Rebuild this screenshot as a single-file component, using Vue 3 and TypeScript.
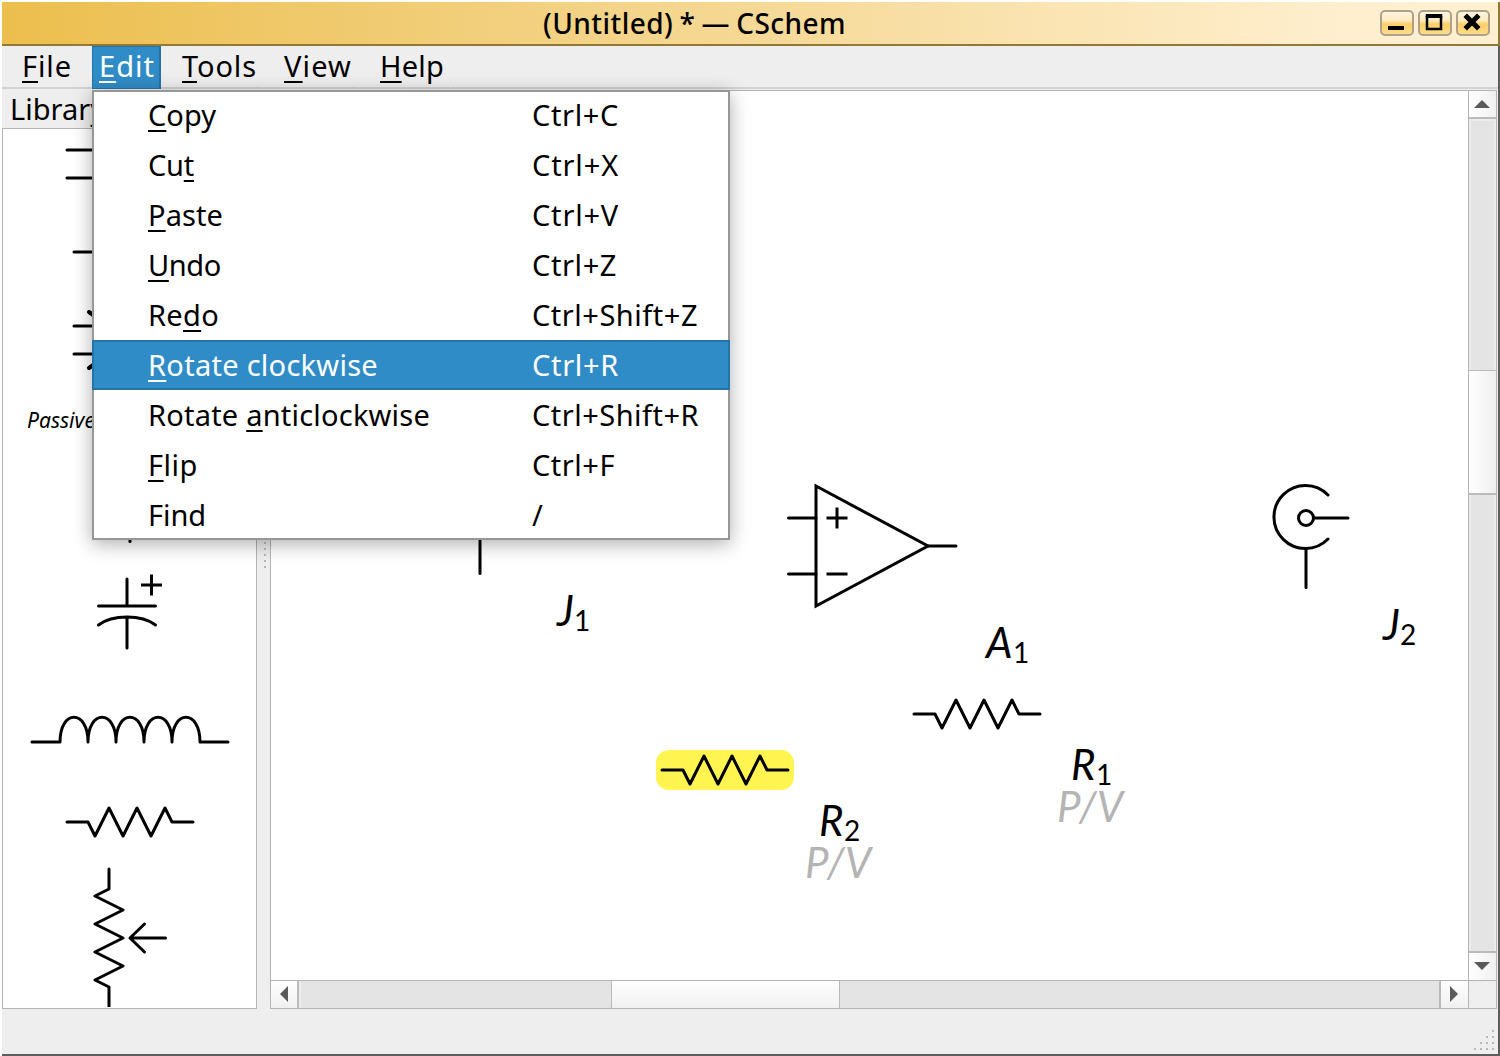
<script setup lang="ts">
import type { Directive } from 'vue'

interface Entry {
  pre: string
  key: string
  post: string
  width: number
}
interface MenuEntry extends Entry {
  shortcut: string
  shortcutWidth: number
  active?: boolean
}
interface PartLabel {
  name: string
  index: string
  x: number
  y: number
  subX: number
  value?: boolean
}

// Spreads the letters so that a caption takes exactly the given advance width.
const vFit: Directive<HTMLElement, number> = {
  mounted(el, { value }) {
    const count = (el.textContent ?? '').length
    const natural = el.getBoundingClientRect().width
    el.style.letterSpacing = `${(value - natural) / count}px`
  },
}

const menuBar: (Entry & { left: number; box: number; active?: boolean })[] = [
  { pre: '', key: 'F', post: 'ile', width: 50, left: 20, box: 90 },
  { pre: '', key: 'E', post: 'dit', width: 56, left: 6, box: 69, active: true },
  { pre: '', key: 'T', post: 'ools', width: 75, left: 21, box: 102 },
  { pre: '', key: 'V', post: 'iew', width: 68, left: 21, box: 96 },
  { pre: '', key: 'H', post: 'elp', width: 64, left: 21, box: 92 },
]

const editMenu: MenuEntry[] = [
  { pre: '', key: 'C', post: 'opy', width: 68, shortcut: 'Ctrl+C', shortcutWidth: 87 },
  { pre: 'Cu', key: 't', post: '', width: 46, shortcut: 'Ctrl+X', shortcutWidth: 87 },
  { pre: '', key: 'P', post: 'aste', width: 75, shortcut: 'Ctrl+V', shortcutWidth: 87 },
  { pre: '', key: 'U', post: 'ndo', width: 73, shortcut: 'Ctrl+Z', shortcutWidth: 85 },
  { pre: 'Re', key: 'd', post: 'o', width: 71, shortcut: 'Ctrl+Shift+Z', shortcutWidth: 166 },
  { pre: '', key: 'R', post: 'otate clockwise', width: 230, shortcut: 'Ctrl+R', shortcutWidth: 87, active: true },
  { pre: 'Rotate ', key: 'a', post: 'nticlockwise', width: 282, shortcut: 'Ctrl+Shift+R', shortcutWidth: 167 },
  { pre: '', key: 'F', post: 'lip', width: 50, shortcut: 'Ctrl+F', shortcutWidth: 83 },
  { pre: 'Find', key: '', post: '', width: 58, shortcut: '/', shortcutWidth: 12 },
]

const labels: PartLabel[] = [
  { name: 'J', index: '1', x: 557, y: 626, subX: 574 },
  { name: 'A', index: '1', x: 986, y: 657.5, subX: 1013 },
  { name: 'J', index: '2', x: 1383, y: 640, subX: 1400 },
  { name: 'R', index: '1', x: 1071, y: 780, subX: 1096, value: true },
  { name: 'R', index: '2', x: 819, y: 836, subX: 844, value: true },
]

const resistor = 'M0 0H21L28 14L42 -14L56 14L70 -14L84 14L98 -14L105 0H126'
</script>

<template>
  <div class="screen">
    <div class="window">
      <header class="title">
        <h1><span v-fit="303">(Untitled) * — CSchem</span></h1>
        <div class="buttons">
          <button>
            <svg width="34" height="26" viewBox="0 0 34 26"><path d="M8 18H24" stroke="#000" stroke-width="4" /></svg>
          </button>
          <button>
            <svg width="34" height="26" viewBox="0 0 34 26">
              <path d="M9 6V19H23V6" fill="none" stroke="#000" stroke-width="2.5" />
              <path d="M7.75 6H24.25" stroke="#000" stroke-width="4" />
            </svg>
          </button>
          <button>
            <svg width="34" height="26" viewBox="0 0 34 26">
              <path d="M11 7L21 17M21 7L11 17" stroke="#000" stroke-width="5" stroke-linecap="square" />
            </svg>
          </button>
        </div>
      </header>

      <nav class="menubar">
        <div
          v-for="m in menuBar"
          :key="m.key"
          class="top"
          :class="{ active: m.active }"
          :style="{ width: m.box + 'px', paddingLeft: m.left + 'px' }"
        >
          <span v-fit="m.width">{{ m.pre }}<u>{{ m.key }}</u>{{ m.post }}</span>
        </div>
        <div class="rest"></div>
      </nav>

      <main class="body">
        <aside class="library">
          <div class="caption"><span v-fit="95">Library</span></div>
          <div class="parts">
            <svg width="253" height="878" viewBox="3 129 253 878">
              <g class="wire">
                <path d="M67 150H120M67 178H120M74 252H120M74 326H120M74 354H120" />
                <path d="M89 312L96 317M89 368L96 363" stroke-width="4" />
                <path d="M130 500V541.500" />
                <path d="M127 579V605M98.500 606H155.500M98.500 625Q109 617 127 617Q145 617 155.500 625M127 618V648" />
                <path d="M151.500 574.500V595.500M141 585H162" stroke-linecap="butt" />
                <path
                  d="M32 742H60C60 709 88 709 88 742C88 709 116 709 116 742C116 709 144 709 144 742C144 709 172 709 172 742C172 709 200 709 200 742H228"
                />
                <path :d="resistor" transform="translate(67 822)" />
                <path d="M109 869V889L95 896L123 910L95 924L123 938L95 952L123 966L95 980L109 987V1012" />
                <path d="M165.500 938H130L144.500 924M130 938L144.500 952" />
              </g>
              <text class="group" x="27" y="428" textLength="77" lengthAdjust="spacingAndGlyphs">Passives</text>
            </svg>
          </div>
        </aside>

        <div class="splitter"><i v-for="n in 5" :key="n"></i></div>

        <section class="view">
          <div class="row">
            <svg class="canvas" width="1197" height="889" viewBox="271 91 1197 889">
              <rect x="656" y="750" width="138" height="40" rx="13" fill="#fff450" />
              <g class="wire">
                <path d="M480 500V573.500" />
                <path d="M816 486L928 546L816 606Z" stroke-linejoin="miter" />
                <path d="M788.500 518H816M788.500 574H816M928 546H956" />
                <path d="M826.500 518H847.500M837 507.500V528.500M826.500 574H847.500" stroke-linecap="butt" />
                <path d="M1328 495A31.500 31.500 0 1 0 1328 539" />
                <circle cx="1306" cy="518" r="7.500" />
                <path d="M1314 518H1348M1306 549V587.500" />
                <path :d="resistor" transform="translate(914 714)" />
                <path :d="resistor" transform="translate(662 770)" />
              </g>
              <g v-for="l in labels" :key="l.name + l.index">
                <text class="name" :x="l.x" :y="l.y">
                  {{ l.name }}<tspan class="sub" :x="l.subX" :y="l.y + 5">{{ l.index }}</tspan>
                </text>
                <text v-if="l.value" class="value" :x="l.x - 14" :y="l.y + 42">P/V</text>
              </g>
            </svg>
            <div class="vbar">
              <div class="step up"><svg width="16" height="8"><path d="M0 8L8 0L16 8Z" /></svg></div>
              <div class="track first"></div>
              <div class="thumb"></div>
              <div class="track"></div>
              <div class="step down"><svg width="16" height="8"><path d="M0 0L8 8L16 0Z" /></svg></div>
            </div>
          </div>
          <div class="hbar">
            <div class="step left"><svg width="8" height="16"><path d="M8 0L0 8L8 16Z" /></svg></div>
            <div class="track first"></div>
            <div class="thumb"></div>
            <div class="track"></div>
            <div class="step right"><svg width="8" height="16"><path d="M0 0L8 8L0 16Z" /></svg></div>
            <div class="corner"></div>
          </div>
        </section>
      </main>

      <footer class="status">
        <svg width="24" height="24" viewBox="0 0 24 24">
          <path
            d="M20 2h2M14 8h2M20 8h2M8 14h2M14 14h2M20 14h2M2 20h2M8 20h2M14 20h2M20 20h2"
            stroke="#b8b8b8"
            stroke-width="2"
          />
        </svg>
      </footer>
    </div>

    <div class="menu">
      <div v-for="m in editMenu" :key="m.shortcut" class="item" :class="{ active: m.active }">
        <div class="label"><span v-fit="m.width">{{ m.pre }}<u>{{ m.key }}</u>{{ m.post }}</span></div>
        <div class="shortcut"><span v-fit="m.shortcutWidth">{{ m.shortcut }}</span></div>
      </div>
    </div>
  </div>
</template>

<style>
body {
  margin: 0;
  background: #fff;
}
</style>

<style scoped>
* {
  box-sizing: border-box;
}
.screen {
  position: relative;
  width: 1500px;
  height: 1056px;
  padding: 2px 0 0 2px;
  overflow: hidden;
  font: 29px/40px 'Noto Sans', 'Open Sans', sans-serif;
  color: #000;
}
.window {
  display: flex;
  flex-direction: column;
  width: 1498px;
  height: 1054px;
  border-bottom: 2px solid #5e5e5e;
  background: #eee;
}
.title {
  display: flex;
  flex: none;
  justify-content: space-between;
  height: 44px;
  border-right: 2px solid #927835;
  border-bottom: 2px solid #927835;
  background: linear-gradient(90deg, #ecbe4d 0%, #f3d387 40%, #ffefcf 90%, #fff0d2 100%);
}
h1 {
  margin: 0 0 0 541px;
  padding-top: 1px;
  font-size: 28px;
  font-weight: 500;
  line-height: 40px;
  white-space: nowrap;
  word-spacing: -1.5px;
}
.buttons {
  display: flex;
  gap: 4px;
  padding: 8px 8px 0 0;
}
button {
  width: 34px;
  height: 26px;
  padding: 0;
  border: 2px solid #aea38a;
  border-radius: 5px;
  background: linear-gradient(#fff6e2 0%, #fde9bb 40%, #fccf68 55%, #fddc8c 100%);
}
button svg {
  display: block;
  margin: -2px;
}
.menubar {
  display: flex;
  flex: none;
  height: 43px;
  border-right: 2px solid #5e5e5e;
}
.top {
  flex: none;
  border-right: 1px solid #eee;
  border-bottom: 2px solid #d2d2d2;
  line-height: 40px;
  white-space: nowrap;
}
.top.active {
  border: 1px solid #2574a5;
  border-right-width: 2px;
  background: #308cc6;
  color: #fff;
  line-height: 38px;
}
.rest {
  flex: 1;
  border-bottom: 2px solid #d2d2d2;
}
u {
  text-decoration: underline 2px;
  text-underline-offset: 4px;
  text-decoration-skip-ink: none;
}
.body {
  display: flex;
  flex: 1;
  min-height: 0;
  padding-top: 1px;
  border-right: 2px solid #5e5e5e;
}
.library {
  display: flex;
  flex: none;
  flex-direction: column;
  width: 255px;
}
.caption {
  height: 38px;
  padding-left: 8px;
  line-height: 37px;
}
.parts {
  flex: 1;
  border: 1px solid #b4b4b4;
  background: #fff;
}
.parts svg,
.canvas {
  display: block;
}
.wire {
  fill: none;
  stroke: #000;
  stroke-width: 3;
  stroke-linecap: round;
  stroke-linejoin: round;
}
.group {
  font-size: 21px;
  font-style: italic;
}
.name,
.value {
  font: italic 42px Lato, sans-serif;
}
.value {
  fill: #b4b4b4;
}
.sub {
  font: 28px Lato, sans-serif;
}
.splitter {
  display: flex;
  flex: none;
  flex-direction: column;
  gap: 4px;
  width: 13px;
  padding: 452px 0 0 7px;
}
.splitter i {
  width: 2px;
  height: 2px;
  background: #b8b8b8;
}
.view {
  flex: none;
  width: 1227px;
  height: 919px;
  border: 1px solid #b4b4b4;
  background: #fff;
}
.row,
.hbar {
  display: flex;
}
.vbar {
  display: flex;
  flex-direction: column;
  width: 28px;
  height: 889px;
  border-left: 1px solid #b4b4b4;
}
.step {
  display: flex;
  flex: none;
  align-items: center;
  justify-content: center;
  background: linear-gradient(90deg, #fff, #f0f0f0);
}
.step svg {
  fill: #5a5a5a;
}
.up {
  height: 28px;
  padding-right: 1px;
  border-bottom: 2px solid #bababa;
}
.down {
  height: 29px;
  padding: 0 1px 1px 0;
  border-top: 2px solid #bababa;
}
.track {
  flex: 1;
  background: #e4e4e4;
}
.vbar .track {
  border: solid #ececec;
  border-width: 0 2px;
}
.vbar .first {
  flex: none;
  height: 251px;
  border-top-width: 2px;
}
.vbar .thumb {
  height: 125px;
  border: solid #bababa;
  border-width: 1px 0 2px;
  background: linear-gradient(90deg, #fff, #efefef);
}
.hbar {
  width: 1225px;
  height: 28px;
  border-top: 1px solid #b4b4b4;
}
.hbar .step,
.hbar .thumb {
  background: linear-gradient(#fff, #f0f0f0);
}
.left {
  width: 28px;
  padding-bottom: 1px;
  border-right: 2px solid #bababa;
}
.right {
  width: 29px;
  padding: 0 1px 1px 0;
  border-left: 2px solid #bababa;
}
.hbar .first {
  flex: none;
  width: 312px;
  border-left: 2px solid #ececec;
}
.hbar .thumb {
  width: 229px;
  border: solid #bababa;
  border-width: 0 1px;
}
.corner {
  width: 28px;
  border-left: 1px solid #b4b4b4;
  background: #efefef;
}
.status {
  display: flex;
  flex: none;
  align-items: flex-end;
  justify-content: flex-end;
  height: 45px;
  padding: 0 2px 1px;
  border-right: 2px solid #5e5e5e;
}
/* The drop-down floats over the library and the drawing. */
.menu {
  position: absolute;
  top: 90px;
  left: 92px;
  width: 638px;
  height: 450px;
  background: #fff;
  box-shadow: inset 0 0 0 2px #979797, 0 4px 18px rgba(0, 0, 0, 0.32);
}
.item {
  display: flex;
  height: 50px;
  padding-left: 56px;
  line-height: 49px;
  white-space: nowrap;
}
.item.active {
  background: #308cc6;
  box-shadow: inset 0 0 0 2px #2574a5;
  color: #fff;
}
.label {
  width: 384px;
}
</style>
